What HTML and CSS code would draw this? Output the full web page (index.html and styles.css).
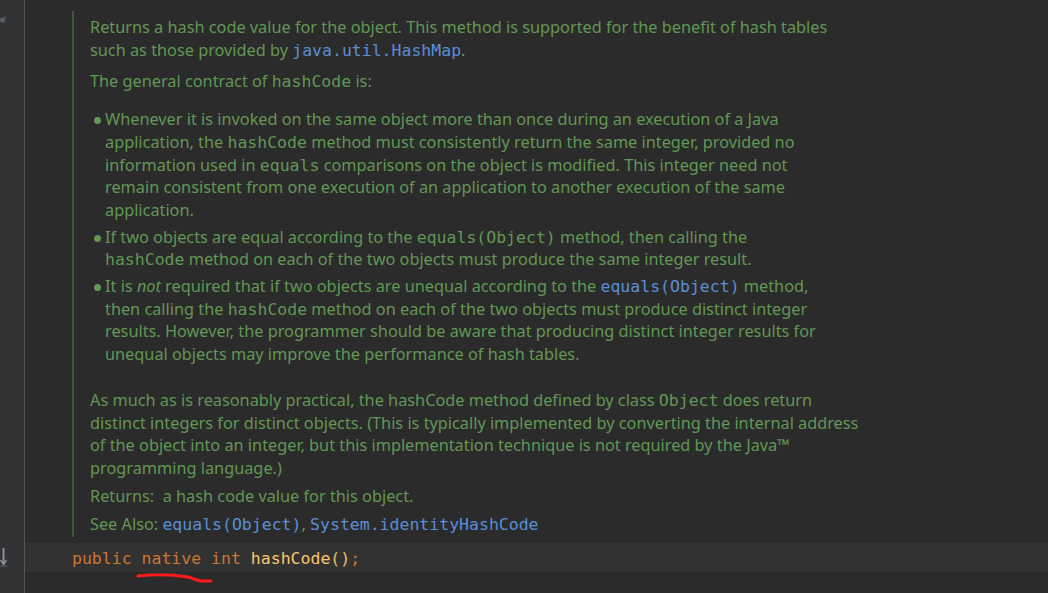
FILE: index.html
```html
<!DOCTYPE html>
<html>
<head>
<meta charset="utf-8">
<link rel="stylesheet" href="styles.css">
</head>
<body>
<div class="window">
  <div class="gutter">
    <div class="gutter-top">
      <svg width="8" height="10" viewBox="0 0 8 10"><circle cx="2.5" cy="4" r="2.6" fill="#5c5f61"/><circle cx="5" cy="1.5" r="1" fill="#5c5f61"/></svg>
    </div>
    <div class="gutter-arrow">
      <svg width="10" height="20" viewBox="0 0 10 20"><line x1="3.5" y1="1" x2="3.5" y2="17" stroke="#8c8f92" stroke-width="2"/><path d="M0.5 13 L3.5 17.5 L6.5 13" stroke="#8c8f92" stroke-width="1.4" fill="none"/><line x1="0.5" y1="19" x2="6.5" y2="19" stroke="#4d6a86" stroke-width="1"/></svg>
    </div>
  </div>
  <div class="editor">
    <div class="doc">
      <div class="doc-body">
        <p class="p1">Returns a hash code value for the object. This method is supported for the benefit of hash tables<br>such as those provided by <a class="link">java.util.HashMap</a>.</p>
        <p class="p2">The general contract of <code>hashCode</code> is:</p>
        <ul class="list">
          <li>Whenever it is invoked on the same object more than once during an execution of a Java<br>application, the <code>hashCode</code> method must consistently return the same integer, provided no<br>information used in <code>equals</code> comparisons on the object is modified. This integer need not<br>remain consistent from one execution of an application to another execution of the same<br>application.</li>
          <li>If two objects are equal according to the <code>equals(Object)</code> method, then calling the<br><code>hashCode</code> method on each of the two objects must produce the same integer result.</li>
          <li>It is <em>not</em> required that if two objects are unequal according to the <a class="link">equals(Object)</a> method,<br>then calling the <code>hashCode</code> method on each of the two objects must produce distinct integer<br>results. However, the programmer should be aware that producing distinct integer results for<br>unequal objects may improve the performance of hash tables.</li>
        </ul>
        <p class="p4">As much as is reasonably practical, the hashCode method defined by class <code>Object</code> does return<br>distinct integers for distinct objects. (This is typically implemented by converting the internal address<br>of the object into an integer, but this implementation technique is not required by the Java™<br>programming language.)</p>
        <p class="p5">Returns:&nbsp; a hash code value for this object.</p>
        <p class="p6">See Also: <a class="link">equals(Object)</a>, <a class="link">System.identityHashCode</a></p>
      </div>
    </div>
    <div class="code-row"><span class="kw">public</span> <span class="kw native">native<svg class="scribble" width="80" height="12" viewBox="0 0 80 12"><path d="M2 3 C 20 1, 40 2, 52 4 C 58 5, 60 8, 66 8 C 70 8, 73 8, 75 8" stroke="#ff1a1a" stroke-width="3" fill="none" stroke-linecap="round"/></svg></span> <span class="kw">int</span> <span class="fn">hashCode</span><span class="paren">()</span><span class="kw">;</span></div>
  </div>
</div>
</body>
</html>
```
FILE: styles.css
```css
html, body {
  margin: 0;
  padding: 0;
  background: #2b2b2b;
  width: 1048px;
  height: 593px;
  overflow: hidden;
}
.window {
  display: flex;
  height: 593px;
}
.gutter {
  width: 24px;
  flex: none;
  background: #313335;
  border-right: 1px solid #555555;
  display: flex;
  flex-direction: column;
}
.gutter-top {
  padding-top: 12px;
  height: 10px;
}
.gutter-arrow {
  margin-top: 525px;
}
.editor {
  flex: 1;
  display: flex;
  flex-direction: column;
}
.doc {
  margin-top: 11px;
  margin-left: 47px;
  border-left: 2px solid #3f5a3a;
  height: 526px;
}
.doc-body {
  padding-left: 16px;
  padding-top: 5px;
  font-family: "Segoe UI", "Noto Sans", sans-serif;
  font-size: 16.3px;
  line-height: 22.7px;
  color: #629755;
}
.doc-body p {
  margin: 0;
}
code, .link {
  font-family: "DejaVu Sans Mono", monospace;
  font-size: 16.5px;
  line-height: 1;
}
.link {
  color: #5a8fd8;
}
em {
  font-style: italic;
}
.p2 { margin-top: 9px !important; }
.list {
  margin: 15px 0 0 0;
  padding: 0 0 0 15px;
}
.list li {
  list-style: none;
  position: relative;
  margin-bottom: 4px;
}
.list li::before {
  content: "";
  position: absolute;
  left: -11px;
  top: 9px;
  width: 7px;
  height: 7px;
  border-radius: 50%;
  background: #629755;
}
.p4 { margin-top: 23px !important; }
.p5 { margin-top: 5px !important; }
.p6 { margin-top: 6px !important; }
.code-row {
  margin-top: 6px;
  height: 29px;
  background: #323232;
  font-family: "DejaVu Sans Mono", monospace;
  font-size: 16.5px;
  line-height: 31px;
  padding-left: 47px;
  white-space: pre;
  color: #a9b7c6;
}
.kw { color: #cc7832; }
.fn { color: #ffc66d; }
.paren { color: #e8bf6a; }
.native { position: relative; }
.scribble {
  position: absolute;
  left: -6px;
  top: 24px;
}
```
